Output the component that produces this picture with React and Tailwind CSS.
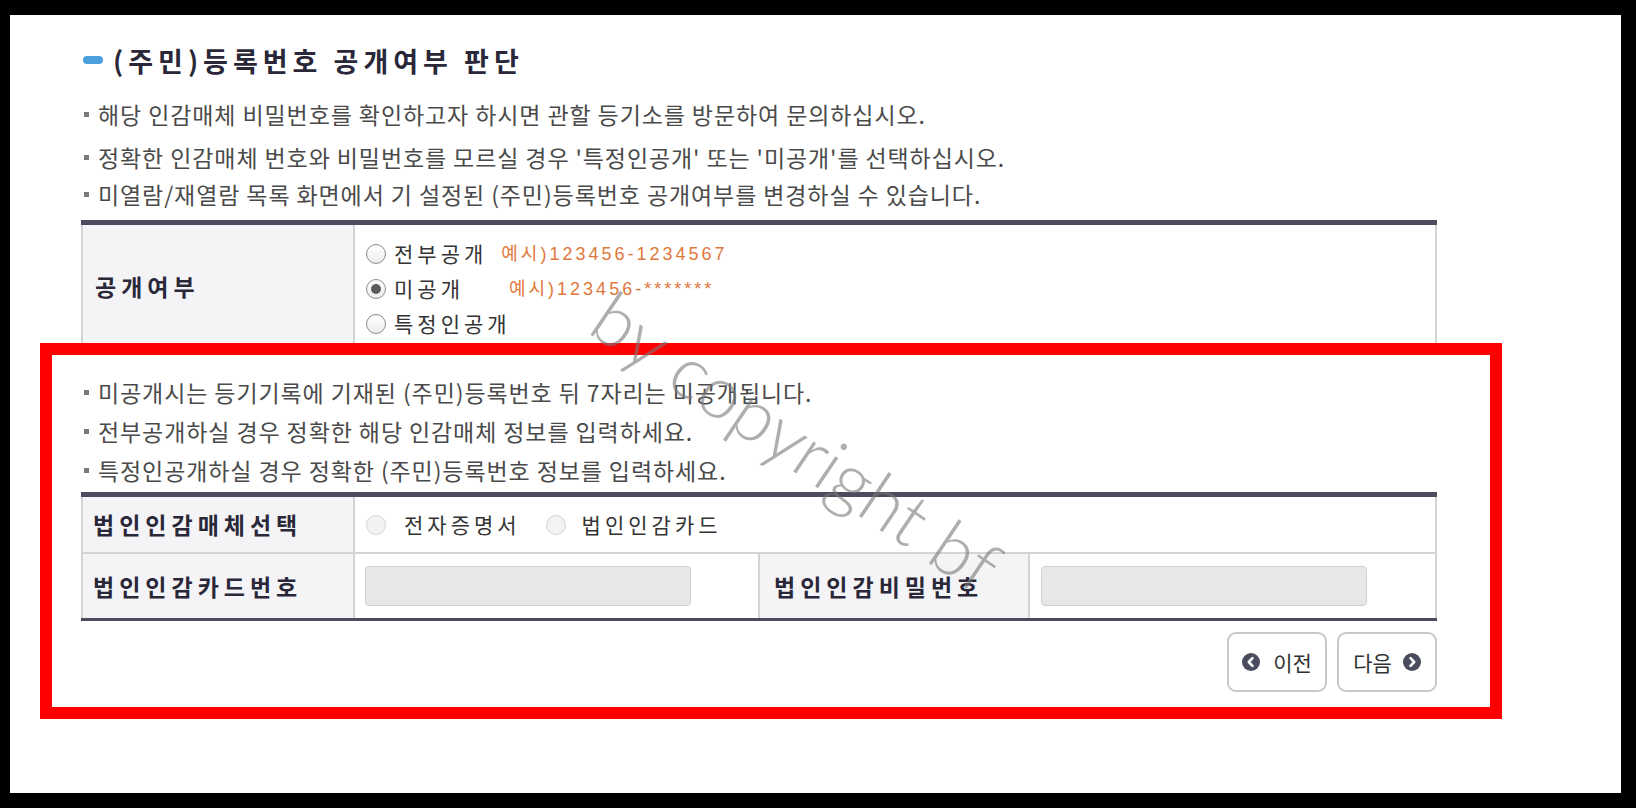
import React from "react";

const KR = { fontFamily: '"Noto Sans CJK KR", "Noto Sans", sans-serif' };
const EX = { fontFamily: '"Liberation Sans", "Noto Sans CJK KR", sans-serif' };

function Bullet({ children, className = "h-[37px]" }) {
  return (
    <li className={`${className} flex items-center text-[23px] tracking-[0.9px] text-[#4a4a4a] leading-none`}>
      <span className="w-[5px] h-[5px] bg-[#7a7a7a] mr-[9px] shrink-0" />
      <span>{children}</span>
    </li>
  );
}

function Radio({ checked }) {
  return (
    <span className="w-[20px] h-[20px] rounded-full border-[1.5px] border-[#8c8c8c] bg-gradient-to-b from-white to-[#ececec] flex items-center justify-center shrink-0">
      {checked && <span className="w-[10px] h-[10px] rounded-full bg-[#5a5a5a]" />}
    </span>
  );
}

function DisabledRadio() {
  return (
    <span className="block w-[20px] h-[20px] rounded-full border border-[#d4d4d4] bg-[#f3f3f3] shrink-0" />
  );
}

function Chevron({ dir }) {
  return (
    <svg width="18" height="18" viewBox="0 0 18 18" className="shrink-0">
      <circle cx="9" cy="9" r="9" fill="#4b4c5e" />
      {dir === "left" ? (
        <polyline points="10.5,5.2 6.8,9 10.5,12.8" fill="none" stroke="#fff" strokeWidth="2.6" strokeLinecap="round" strokeLinejoin="round" />
      ) : (
        <polyline points="7.5,5.2 11.2,9 7.5,12.8" fill="none" stroke="#fff" strokeWidth="2.6" strokeLinecap="round" strokeLinejoin="round" />
      )}
    </svg>
  );
}

const TH = "bg-[#f4f4f7] border-r-2 border-[#d4d4d4] flex items-center text-[23px] font-bold tracking-[5px] text-[#2a2838] leading-none";
const LBL = "text-[21px] tracking-[4px] text-[#333] leading-none";

export default function App() {
  return (
    <div className="relative w-[1636px] h-[808px] bg-black pt-[15px] pl-[10px] overflow-hidden" style={KR}>
      <div className="w-[1611px] h-[778px] bg-white flex flex-col">
        {/* Title */}
        <div className="mt-[25px] h-[40px] flex items-center pl-[73px]">
          <span className="w-[20px] h-[8px] rounded-full bg-[#4ba0dd]" />
          <h2 className="ml-[10px] text-[27px] font-bold tracking-[5px] text-[#2a2838] leading-none">
            (주민)등록번호 공개여부 판단
          </h2>
        </div>

        {/* Bullets 1 */}
        <ul className="mt-[16px] pl-[74px]">
          <Bullet>해당 인감매체 비밀번호를 확인하고자 하시면 관할 등기소를 방문하여 문의하십시오.</Bullet>
          <Bullet className="h-[37px] mt-[6px]">정확한 인감매체 번호와 비밀번호를 모르실 경우 '특정인공개' 또는 '미공개'를 선택하십시오.</Bullet>
          <Bullet>미열람/재열람 목록 화면에서 기 설정된 (주민)등록번호 공개여부를 변경하실 수 있습니다.</Bullet>
        </ul>

        {/* Table 1 (cut off by annotation box) */}
        <div className="mt-[7px] ml-[71px] w-[1356px]">
          <div className="h-[5px] bg-[#4b4c5e]" />
          <div className="h-[118px] overflow-hidden border-x-2 border-[#d4d4d4]">
            <div className="flex h-[132px]">
              <div className={`w-[272px] pl-[12px] pb-[10px] ${TH}`}>공개여부</div>
              <div className="flex-1 pl-[11px] pt-[11px] flex flex-col">
                <div className="h-[35px] flex items-center">
                  <Radio />
                  <span className={`ml-[8px] ${LBL}`}>전부공개</span>
                  <span className="ml-[14px] text-[18px] tracking-[3px] text-[#e0783c] leading-none" style={EX}>
                    예시)123456-1234567
                  </span>
                </div>
                <div className="h-[35px] flex items-center">
                  <Radio checked />
                  <span className={`ml-[8px] ${LBL}`}>미공개</span>
                  <span className="ml-[45px] text-[18px] tracking-[3px] text-[#e0783c] leading-none" style={EX}>
                    예시)123456-*******
                  </span>
                </div>
                <div className="h-[35px] flex items-center">
                  <Radio />
                  <span className={`ml-[8px] ${LBL}`}>특정인공개</span>
                </div>
              </div>
            </div>
          </div>
        </div>

        {/* Red annotation box */}
        <div className="ml-[30px] w-[1462px] h-[376px] border-[12px] border-[#ff0000] bg-white">
          <ul className="mt-[18px] pl-[32px]">
            <Bullet className="h-[39px]">미공개시는 등기기록에 기재된 (주민)등록번호 뒤 7자리는 미공개됩니다.</Bullet>
            <Bullet className="h-[39px]">전부공개하실 경우 정확한 해당 인감매체 정보를 입력하세요.</Bullet>
            <Bullet className="h-[39px]">특정인공개하실 경우 정확한 (주민)등록번호 정보를 입력하세요.</Bullet>
          </ul>

          <div className="mt-[2px] ml-[29px] w-[1356px]">
            <div className="h-[5px] bg-[#4b4c5e]" />
            <div className="border-x-2 border-[#d4d4d4]">
              <div className="flex h-[57px] border-b-2 border-[#d4d4d4]">
                <div className={`w-[272px] pl-[10px] ${TH}`}>법인인감매체선택</div>
                <div className="flex-1 flex items-center pl-[11px]">
                  <DisabledRadio />
                  <span className={`ml-[18px] ${LBL}`}>전자증명서</span>
                  <span className="ml-[25px]"><DisabledRadio /></span>
                  <span className={`ml-[16px] ${LBL}`}>법인인감카드</span>
                </div>
              </div>
              <div className="flex h-[64px]">
                <div className={`w-[272px] pl-[10px] ${TH}`}>법인인감카드번호</div>
                <div className="w-[405px] border-r-2 border-[#d4d4d4] flex items-center pl-[10px]">
                  <div className="w-[326px] h-[40px] rounded-[4px] border border-[#cfcfcf] bg-[#e7e7e7]" />
                </div>
                <div className={`w-[270px] pl-[14px] ${TH}`}>법인인감비밀번호</div>
                <div className="flex-1 flex items-center pl-[11px]">
                  <div className="w-[326px] h-[40px] rounded-[4px] border border-[#cfcfcf] bg-[#e7e7e7]" />
                </div>
              </div>
            </div>
            <div className="h-[3px] bg-[#4b4c5e]" />

            <div className="mt-[11px] flex justify-end gap-[10px]">
              <button className="w-[100px] h-[60px] rounded-[9px] border-2 border-[#c8c8c8] bg-white flex items-center justify-center gap-[13px] text-[21px] text-[#333] leading-none">
                <Chevron dir="left" />
                <span>이전</span>
              </button>
              <button className="w-[100px] h-[60px] rounded-[9px] border-2 border-[#c8c8c8] bg-white flex items-center justify-center gap-[11px] text-[21px] text-[#333] leading-none">
                <span>다음</span>
                <Chevron dir="right" />
              </button>
            </div>
          </div>
        </div>
      </div>

      {/* Watermark */}
      <div
        className="absolute left-[797px] top-[441px] -translate-x-1/2 -translate-y-1/2 rotate-[34deg] pointer-events-none whitespace-nowrap text-[73px] font-light text-[rgba(120,120,120,0.6)] leading-none"
        style={{ fontFamily: 'Lato, "DejaVu Sans", sans-serif' }}
      >
        by copyright bf
      </div>
    </div>
  );
}
